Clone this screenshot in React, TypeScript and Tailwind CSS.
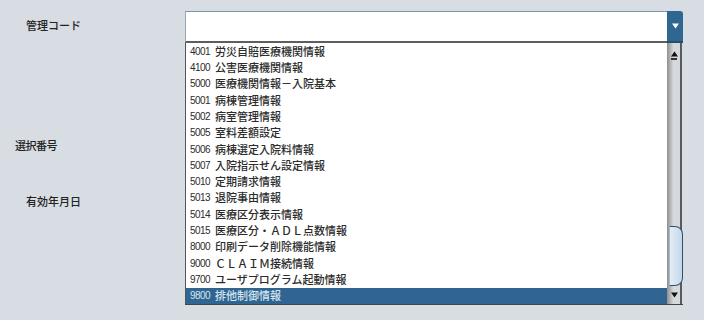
import React from "react";

const items: [string, string][] = [
  ["4001", "労災自賠医療機関情報"],
  ["4100", "公害医療機関情報"],
  ["5000", "医療機関情報－入院基本"],
  ["5001", "病棟管理情報"],
  ["5002", "病室管理情報"],
  ["5005", "室料差額設定"],
  ["5006", "病棟選定入院料情報"],
  ["5007", "入院指示せん設定情報"],
  ["5010", "定期請求情報"],
  ["5013", "退院事由情報"],
  ["5014", "医療区分表示情報"],
  ["5015", "医療区分・ＡＤＬ点数情報"],
  ["8000", "印刷データ削除機能情報"],
  ["9000", "ＣＬＡＩＭ接続情報"],
  ["9700", "ユーザプログラム起動情報"],
  ["9800", "排他制御情報"],
];

function Tri({ down, color }: { down?: boolean; color: string }) {
  return (
    <svg width="7" height="6" viewBox="0 0 7 6">
      {down ? (
        <polygon points="0,0.5 7,0.5 3.5,5.5" fill={color} />
      ) : (
        <polygon points="0,5.5 7,5.5 3.5,0.5" fill={color} />
      )}
    </svg>
  );
}

export default function App() {
  return (
    <div className="w-[704px] h-[320px] bg-[#d8dce3] flex overflow-hidden font-['Noto_Sans_CJK_JP','Noto_Sans',sans-serif]">
      <div className="w-[185px] flex flex-col text-[11px] text-[#222] font-medium">
        <div className="pl-[26px] mt-[17px] h-[16px] leading-[16px]">管理コード</div>
        <div className="pl-[15px] mt-[104px] h-[16px] leading-[16px] tracking-[-0.5px]">選択番号</div>
        <div className="pl-[26px] mt-[40px] h-[16px] leading-[16px]">有効年月日</div>
      </div>
      <div className="w-[498px] mt-[11px] flex flex-col">
        <div className="h-[32px] flex">
          <div className="flex-1 bg-white border-t border-t-[#7f98ae] border-l border-l-[#9aa6b1] border-b-2 border-b-[#5e5e5e]" />
          <div className="w-[16px] bg-[#2f6791] rounded-tr-[3px] border-b-2 border-b-[#24506f] flex items-center justify-center">
            <Tri down color="#ffffff" />
          </div>
        </div>
        <div className="h-[262px] flex">
          <div className="flex-1 bg-white border-l border-l-[#555] border-b border-b-[#444] flex flex-col text-[11px] text-[#2b2b2b] font-medium">
            {items.map(([code, name], i) => {
              const sel = i === items.length - 1;
              return (
                <div
                  key={code}
                  className={
                    sel
                      ? "h-[16.35px] flex items-center bg-[#2f6590] text-[#d6e4ef]"
                      : "h-[16.35px] flex items-center"
                  }
                >
                  <span className="w-[29px] pl-[4px] shrink-0 font-['Liberation_Sans',sans-serif] text-[10px] font-normal tracking-[-0.6px]">
                    {code}
                  </span>
                  <span className="whitespace-nowrap leading-none">{name}</span>
                </div>
              );
            })}
          </div>
          <div className="w-[16px] flex flex-col border-b border-b-[#444] bg-[linear-gradient(to_right,#8e8e8e,#c6c6c6_30%,#d5d8dc_40%,#d5d8dc_84%,#5a5a5a_84%,#5a5a5a_92%,#d8dce3_92%)]">
            <div className="h-[15px] flex items-end justify-center pb-[1px] pr-[2px]">
              <Tri color="#111" />
            </div>
            <div className="h-[3px] flex justify-center pr-[2px]">
              <div className="w-[6px] h-[2px] bg-[#333]" />
            </div>
            <div className="flex-1" />
            <div className="h-[60px] ml-[2px] w-[14px] bg-[linear-gradient(to_right,#e4edf5,#c3d7ea)] border border-[#2e4e70] border-l-[#9fb8cf] rounded-r-[8px]" />
            <div className="h-[18px] flex items-center justify-center pr-[2px]">
              <Tri down color="#111" />
            </div>
          </div>
        </div>
      </div>
    </div>
  );
}
